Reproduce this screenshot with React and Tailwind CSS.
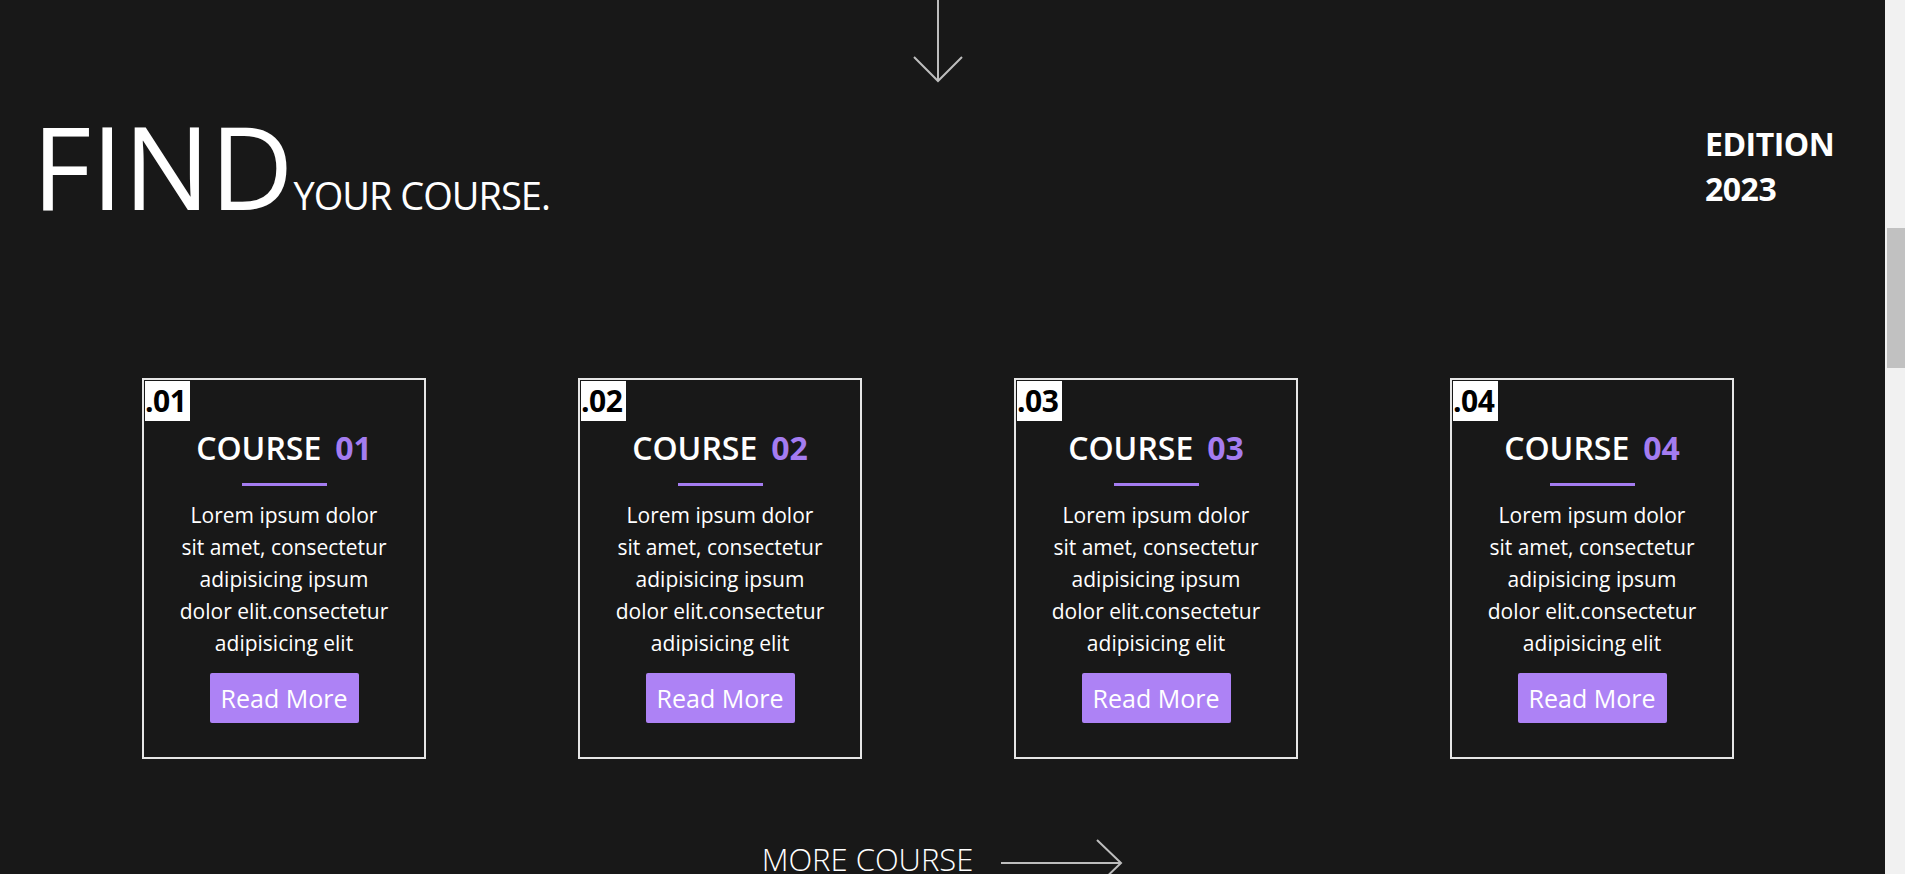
import React from "react";

const font = { fontFamily: '"Open Sans", "Noto Sans", sans-serif' };

function Card({ n }) {
  return (
    <div className="relative w-[284px] h-[381px] border-2 border-[#e6e6e6] flex flex-col items-center pt-[50px]">
      <div className="absolute top-[1px] left-[1px] w-[45px] h-[40px] bg-white text-black font-bold text-[30px] leading-[40px] tracking-[-0.5px] whitespace-nowrap">
        .{n}
      </div>
      <div className="text-[32px] leading-[36px] font-semibold text-white whitespace-nowrap">
        COURSE<span className="ml-[14px] text-[#a47cf0] font-bold">{n}</span>
      </div>
      <div className="mt-[17px] w-[85px] h-[3px] bg-[#a47cf0]" />
      <p className="mt-[13px] text-[21px] leading-[32px] text-white text-center whitespace-nowrap">
        Lorem ipsum dolor
        <br />
        sit amet, consectetur
        <br />
        adipisicing ipsum
        <br />
        dolor elit.consectetur
        <br />
        adipisicing elit
      </p>
      <button className="mt-[14px] w-[149px] h-[50px] rounded-[2px] bg-[#ad82f5] text-white text-[25px] leading-none">
        Read More
      </button>
    </div>
  );
}

export default function App() {
  return (
    <div className="flex h-[874px] overflow-hidden bg-[#181818]" style={font}>
      <main className="flex-1 h-[874px] overflow-hidden">
        <div className="flex justify-center pr-[10px] h-[84px]">
          <svg width="52" height="84" viewBox="0 0 52 84" fill="none">
            <line x1="26" y1="0" x2="26" y2="81" stroke="#bdbdbd" strokeWidth="2" />
            <polyline points="2,57 26,81 50,57" stroke="#bdbdbd" strokeWidth="2" fill="none" />
          </svg>
        </div>
        <div className="h-[294px] flex justify-between items-start">
          <div className="flex items-baseline pl-[32px] mt-[24px]">
            <span className="text-[115px] leading-none text-white">FIND</span>
            <span className="text-[38px] leading-none text-white tracking-[-1px]">YOUR COURSE.</span>
          </div>
          <div className="mt-[37px] mr-[42px] w-[138px] text-[32px] leading-[45px] font-bold text-white tracking-[-0.5px]">
            EDITION
            <br />
            2023
          </div>
        </div>
        <div className="flex pl-[142px] gap-[152px]">
          <Card n="01" />
          <Card n="02" />
          <Card n="03" />
          <Card n="04" />
        </div>
        <div className="mt-[71px] flex justify-center items-center gap-[28px]">
          <span className="text-[31px] leading-[37px] font-light text-white">MORE COURSE</span>
          <svg width="122" height="50" viewBox="0 0 122 50" fill="none" className="mt-[8px]">
            <line x1="0" y1="25" x2="120" y2="25" stroke="#bdbdbd" strokeWidth="2" />
            <polyline points="96,2 120,25 96,48" stroke="#bdbdbd" strokeWidth="2" fill="none" />
          </svg>
        </div>
      </main>
      <div className="w-[20px] h-[874px] bg-[#f1f1f1] pt-[228px] pl-[2px]">
        <div className="h-[140px] bg-[#c1c1c1]" />
      </div>
    </div>
  );
}
